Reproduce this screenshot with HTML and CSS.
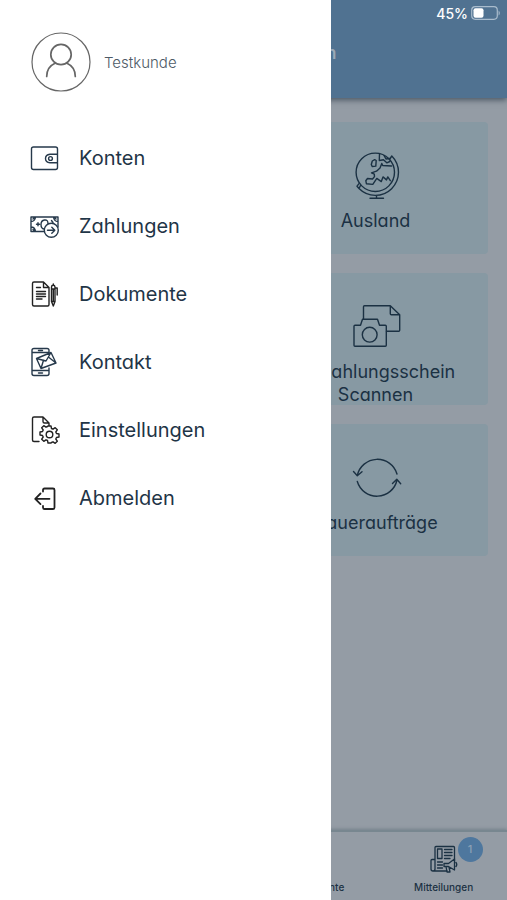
FILE: index.html
```html
<!DOCTYPE html>
<html lang="de">
<head>
<meta charset="utf-8">
<meta name="viewport" content="width=device-width, initial-scale=1">
<title>Zahlungen</title>
<link rel="stylesheet" href="styles.css">
</head>
<body>
<div class="app">
  <header class="header">
    <div class="status">
      <span>45%</span>
      <svg class="battery" viewBox="0 0 30 14" aria-hidden="true">
        <rect x="0.7" y="0.7" width="25.6" height="12.6" rx="3.5" fill="none" stroke="#a9bccd" stroke-width="1.2"/>
        <rect x="2.5" y="2.2" width="10" height="9.6" rx="2" fill="#fff"/>
        <path d="M27.6 4.4q2.4 2.6 0 5.2z" fill="#a9bccd"/>
      </svg>
    </div>
    <h1 class="title">Zahlungen erfassen</h1>
  </header>

  <main class="cards">
    <a class="card" href="#ausland">
      <svg class="card-icon" viewBox="0 0 56 56" aria-hidden="true">
        <circle cx="27.3" cy="26.3" r="19.2"/>
        <path d="M41.500 13.500l2.300-3.500A23 23 0 0 1 11 42.500l1.500-3M11 42.500l-2-2.300 1.800-2.400M28.500 49.500V52M22 52.200h13.500"/>
        <path d="M24.300 15l2.400-1.300 1.500.8-.4 5.600-3.600.4-.9-2zM31.500 8l-.2 6.500 4.200-.7 3.300 3 3-1.300M43.500 20l-8.800-.5-.9-2-1.800 4.500-3.500 3.200-5 1.600 2.800 1.300.2 2.500-2 2.400-5-.5-1.700 2.200.6 3 6.400.7 4-6 4.500 3.200 1.700-4.700 3.500 3 1.300-3 2.500 3.800M36 9.500l2 3.500 3.500-.5"/>
      </svg>
      <span class="card-label">Ausland</span>
    </a>
    <a class="card" href="#scannen">
      <svg class="card-icon" viewBox="0 0 56 56" aria-hidden="true">
        <path d="M15.500 22V9.700q0-1 1-1h25.800l9.400 9v15.600q0 1-1 1H38.500M42.300 8.700v8q0 1 1 1h8.400"/>
        <path d="M7 49.300q-1 0-1-1v-19q0-1 1-1h5.500l2-6h15l2 6h5.800q1 0 1 1v19q0 1-1 1z"/>
        <circle cx="21.700" cy="37.700" r="7.400"/>
      </svg>
      <span class="card-label">Einzahlungsschein Scannen</span>
    </a>
    <a class="card" href="#dauerauftraege">
      <svg class="card-icon" viewBox="0 0 56 56" aria-hidden="true">
        <path d="M49 26A20.500 20.500 0 0 0 9.300 27.500M5.500 23.500l3.800 4.200 4.700-4M9.300 33.500A20.500 20.500 0 0 0 49 32M44.500 35.500l4.300-4.200 3.900 4.400"/>
      </svg>
      <span class="card-label">Daueraufträge</span>
    </a>
  </main>

  <nav class="tabs" aria-label="Bereiche">
    <a class="tab tab-documents" href="#dokumente">Dokumente</a>
    <a class="tab" href="#mitteilungen">
      <span class="tab-picture">
        <svg class="tab-icon" viewBox="0 0 28 28" aria-hidden="true">
          <path d="M5 14.500V2.500q0-1 1-1h17.500q1 0 1 1V16M5 14.500H2q-1 0-1 1V24q0 2 2 2h14M5 14.500V24q0 2-2 2M7.500 4h4.500v9.500H7.500zM14.500 4.500H22M14.500 7.500H22M14.500 10.500H22M14.500 13.500H20M7.500 17h5M7.500 20h5M7.500 23h5"/>
          <path d="M14 18.500h4.500l6-4.500v11l-6-3.500H14zM16 21.500l1 5.500h3l-1-5M26 17.500q1.500 2 0 4"/>
        </svg>
        <span class="badge">1</span>
      </span>
      Mitteilungen
    </a>
  </nav>
</div>

<aside class="drawer">
  <div class="profile">
    <svg class="avatar" viewBox="0 0 60 60" aria-hidden="true">
      <circle cx="30" cy="30" r="29" stroke-width="1.200"/>
      <circle cx="30" cy="22.500" r="10.200" stroke-width="1.700"/>
      <path d="M15.700 44.500c0-6.500 3.500-11 8.300-13.200M44.300 44.500c0-6.500-3.500-11-8.300-13.200" stroke-width="1.700"/>
    </svg>
    <span>Testkunde</span>
  </div>
  <nav class="menu" aria-label="Hauptmenü">
    <a class="item" href="#konten">
      <svg class="icon" viewBox="0 0 32 32" aria-hidden="true">
        <path d="M28.500 11.500V7q0-2-2-2h-22q-2 0-2 2v18.500q0 2 2 2h22q2 0 2-2V21M28.500 12.200h-7.500q-4.500.5-4.500 4.300t4.500 4.300h7.500zM28.500 11v11"/>
        <circle cx="21.500" cy="16.500" r="1.900"/>
      </svg>
      Konten
    </a>
    <a class="item" href="#zahlungen">
      <svg class="icon" viewBox="0 0 32 32" aria-hidden="true">
        <path d="M15 21.500H2V7h27v10M2 11.500q4 0 4.500-4.500M2 17q4 0 4.500 4.500M29 11.500q-4 0-4.500-4.500M4 9l1-1M26 8l1 1M4 19.500l1 1M10.500 14.200H7.500M9 12.700v3M22.500 10.500l1.500 2M15 19q-3-.5-3-4.500t3.500-4.500 3.500 3.500"/>
        <circle cx="22.300" cy="20.300" r="7"/>
        <path d="M18.500 20.300h7.200M22.800 17.300l3 3-3 3"/>
      </svg>
      Zahlungen
    </a>
    <a class="item icon-dark" href="#dokumente">
      <svg class="icon" viewBox="0 0 32 32" aria-hidden="true">
        <path d="M20 9.500v17q0 1.500-1.300 1.500H5q-1.500 0-1.500-1.500V5.500Q3.500 4 5 4h9.500zM14.500 4v5.500H20M7.500 9.500h4M7.500 13.500h9M7.500 16h9M7.500 18.500h9M7.500 21h5.500"/>
        <path d="M22.500 9q0-1.700 1.700-1.700T26 9v14.500L24.300 28l-1.800-4.500zM22.500 11H26M22.500 23.500H26M24.300 7.300V6M26 10h2.200v7M24.300 12v11"/>
      </svg>
      Dokumente
    </a>
    <a class="item" href="#kontakt">
      <svg class="icon" viewBox="0 0 32 32" aria-hidden="true">
        <path d="M20 7V4.500q0-2-2-2H5q-2 0-2 2v23q0 2 2 2h13q2 0 2-2V22M3 6.500h17M3 24.500h17M9.500 27h4M9.500 4.500h4"/>
        <path d="M7.500 12.500L22 6.500l5 10.500-15 5.500zM7.500 12.500l9.500 2.500L22 6.500M12 22.500l2.500-8.200M27 17l-7-5.500"/>
      </svg>
      Kontakt
    </a>
    <a class="item icon-dark" href="#einstellungen">
      <svg class="icon" viewBox="0 0 32 32" aria-hidden="true">
        <path d="M10 27.500H5q-1.500 0-1.500-1.500V4.500Q3.500 3 5 3h9l6 6v2.500M14 3v4.500Q14 9 15.500 9H20"/>
        <circle cx="20.500" cy="20.500" r="3.300"/>
        <path d="M19 12h3l.5 2.500 1.500.7 2.200-1.500 2.100 2.100-1.500 2.200.7 1.500 2.500.5v3l-2.500.5-.7 1.500 1.500 2.200-2.100 2.100-2.200-1.500-1.500.7L22 29h-3l-.5-2.500-1.500-.7-2.200 1.500-2.100-2.100 1.500-2.200-.7-1.500-2.500-.5v-3l2.500-.5.7-1.500-1.500-2.200 2.100-2.100 2.200 1.500 1.500-.7z"/>
      </svg>
      Einstellungen
    </a>
    <a class="item icon-dark" href="#abmelden">
      <svg class="icon" viewBox="0 0 32 32" aria-hidden="true">
        <path class="strong" d="M14 9.500V8q0-1.500 1.500-1.500h8.500q1.500 0 1.500 1.500v17.500q0 1.500-1.500 1.500h-8.500q-1.500 0-1.500-1.500V24M20.500 16.800H6.500M11.500 11.500l-5.300 5.300 5.300 5.300"/>
      </svg>
      Abmelden
    </a>
  </nav>
</aside>
</body>
</html>
```
FILE: styles.css
```css
* {
  box-sizing: border-box;
}

body {
  margin: 0;
  font-family: Inter, "Liberation Sans", sans-serif;
  font-feature-settings: "cv11";
  color: #1f3547;
}

a {
  color: inherit;
  text-decoration: none;
}

svg {
  flex: none;
  fill: none;
  stroke: currentColor;
  stroke-linecap: round;
  stroke-linejoin: round;
}

.app {
  display: flex;
  flex-direction: column;
  min-height: 100vh;
  background: #949ca5;
  color: #1b3143;
}

.header {
  height: 98px;
  padding: 3px 6px 0;
  background: #507291;
  box-shadow: 0 2px 6px rgba(40, 55, 70, 0.7);
}

.status {
  display: flex;
  align-items: center;
  justify-content: flex-end;
  gap: 3px;
  height: 20px;
  font-size: 14px;
  font-weight: 500;
  color: #fff;
}

.battery {
  width: 30px;
  height: 14px;
  stroke: none;
}

.title {
  margin: 19px 0 0;
  font-size: 17px;
  font-weight: 600;
  line-height: 22px;
  text-align: center;
  color: #9aa9b7;
}

.cards {
  flex: 1;
  display: grid;
  grid-template-columns: 1fr 1fr;
  grid-auto-rows: 132px;
  gap: 19px;
  padding: 24px 19px;
}

.card {
  grid-column: 2;
  display: flex;
  flex-direction: column;
  align-items: center;
  gap: 7px;
  padding-top: 24px;
  border-radius: 4px;
  background: #8799a3;
}

.card-icon {
  width: 56px;
  height: 56px;
  stroke-width: 1.4;
}

.card-label {
  padding: 0 24px;
  font-size: 18px;
  line-height: 23px;
  text-align: center;
}

.tabs {
  display: grid;
  grid-template-columns: repeat(4, 1fr);
  height: 70px;
  padding-bottom: 6px;
  border-top: 2px solid #788790;
  box-shadow: 0 -1px 3px rgba(70, 90, 100, 0.4);
  font-size: 10px;
  font-weight: 500;
  line-height: 14px;
}

.tab {
  display: flex;
  flex-direction: column;
  align-items: center;
  justify-content: flex-end;
  gap: 7px;
}

.tab-documents {
  grid-column: 3;
}

.tab-picture {
  position: relative;
  display: flex;
}

.tab-icon {
  width: 28px;
  height: 28px;
  stroke-width: 1.3;
}

.badge {
  position: absolute;
  top: -8px;
  left: 28px;
  width: 25px;
  height: 25px;
  border-radius: 50%;
  background: #4e779e;
  color: #8ba0b5;
  font-size: 11px;
  line-height: 25px;
  text-align: center;
}

.drawer {
  position: fixed;
  top: 0;
  bottom: 0;
  left: 0;
  width: 65.3%;
  padding-top: 32px;
  overflow: auto;
  background: #fff;
}

.profile {
  display: flex;
  align-items: center;
  gap: 13px;
  padding-left: 31px;
  font-size: 15px;
  font-weight: 300;
  color: #4d5a66;
}

.avatar {
  width: 60px;
  height: 60px;
  stroke: #666;
}

.menu {
  padding-top: 32px;
}

.item {
  display: flex;
  align-items: center;
  gap: 18px;
  height: 68px;
  padding-left: 29px;
  font-size: 20px;
}

.icon {
  width: 32px;
  height: 32px;
  stroke: #26394b;
  stroke-width: 1.4;
}

.icon-dark .icon {
  stroke: #222;
}

.strong {
  stroke-width: 1.8;
}
```
